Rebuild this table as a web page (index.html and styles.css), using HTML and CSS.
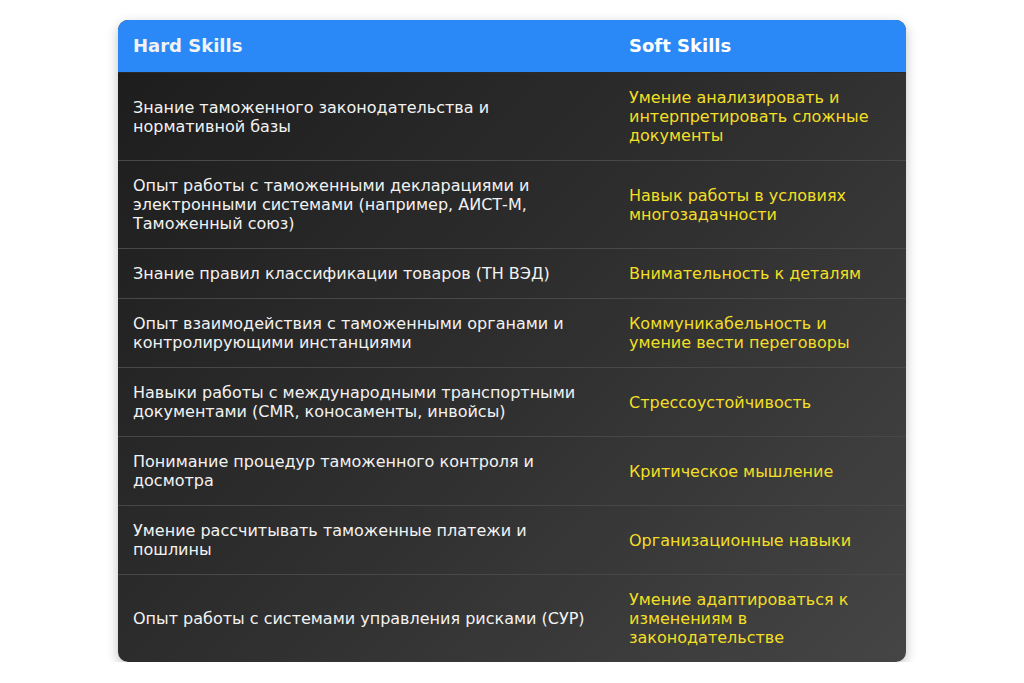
FILE: index.html
```html
<!DOCTYPE html>
<html lang="ru">
<head>
<meta charset="utf-8">
<link rel="stylesheet" href="styles.css">
</head>
<body>
<div class="wrap">
<table class="skills">
<thead>
<tr><th class="hard">Hard Skills</th><th class="soft">Soft Skills</th></tr>
</thead>
<tbody>
<tr><td class="hard">Знание таможенного законодательства и нормативной базы</td><td class="soft">Умение анализировать и интерпретировать сложные документы</td></tr>
<tr><td class="hard">Опыт работы с таможенными декларациями и электронными системами (например, АИСТ-М, Таможенный союз)</td><td class="soft">Навык работы в условиях многозадачности</td></tr>
<tr><td class="hard">Знание правил классификации товаров (ТН ВЭД)</td><td class="soft">Внимательность к деталям</td></tr>
<tr><td class="hard">Опыт взаимодействия с таможенными органами и контролирующими инстанциями</td><td class="soft">Коммуникабельность и умение вести переговоры</td></tr>
<tr><td class="hard">Навыки работы с международными транспортными документами (CMR, коносаменты, инвойсы)</td><td class="soft">Стрессоустойчивость</td></tr>
<tr><td class="hard">Понимание процедур таможенного контроля и досмотра</td><td class="soft">Критическое мышление</td></tr>
<tr><td class="hard">Умение рассчитывать таможенные платежи и пошлины</td><td class="soft">Организационные навыки</td></tr>
<tr><td class="hard">Опыт работы с системами управления рисками (СУР)</td><td class="soft">Умение адаптироваться к изменениям в законодательстве</td></tr>
</tbody>
</table>
</div>
</body>
</html>
```
FILE: styles.css
```css
html, body {
  margin: 0;
  padding: 0;
  background: #ffffff;
  font-family: "DejaVu Sans", Verdana, sans-serif;
}
.wrap {
  width: 788px;
  margin: 20px auto 0;
  border-radius: 10px;
  overflow: hidden;
  background: linear-gradient(135deg, #1c1c1c 0%, #2e2e2e 50%, #454545 100%);
  box-shadow: 0 4px 12px rgba(0, 0, 0, 0.25);
}
.skills {
  width: 100%;
  border-collapse: collapse;
}
.skills th {
  background: #2a89f6;
  color: #ffffff;
  font-weight: bold;
  font-size: 18px;
  text-align: left;
  padding: 15px;
  line-height: 22px;
}
.skills td {
  font-size: 16px;
  line-height: 19px;
  padding: 15px;
  vertical-align: middle;
  border-top: 1px solid #484848;
}
.skills tbody tr:first-child td {
  border-top-color: #2a2a2a;
}
.skills .hard {
  width: 466px;
  color: #f2f2f2;
}
.skills td.soft {
  color: #f2df26;
}
```
